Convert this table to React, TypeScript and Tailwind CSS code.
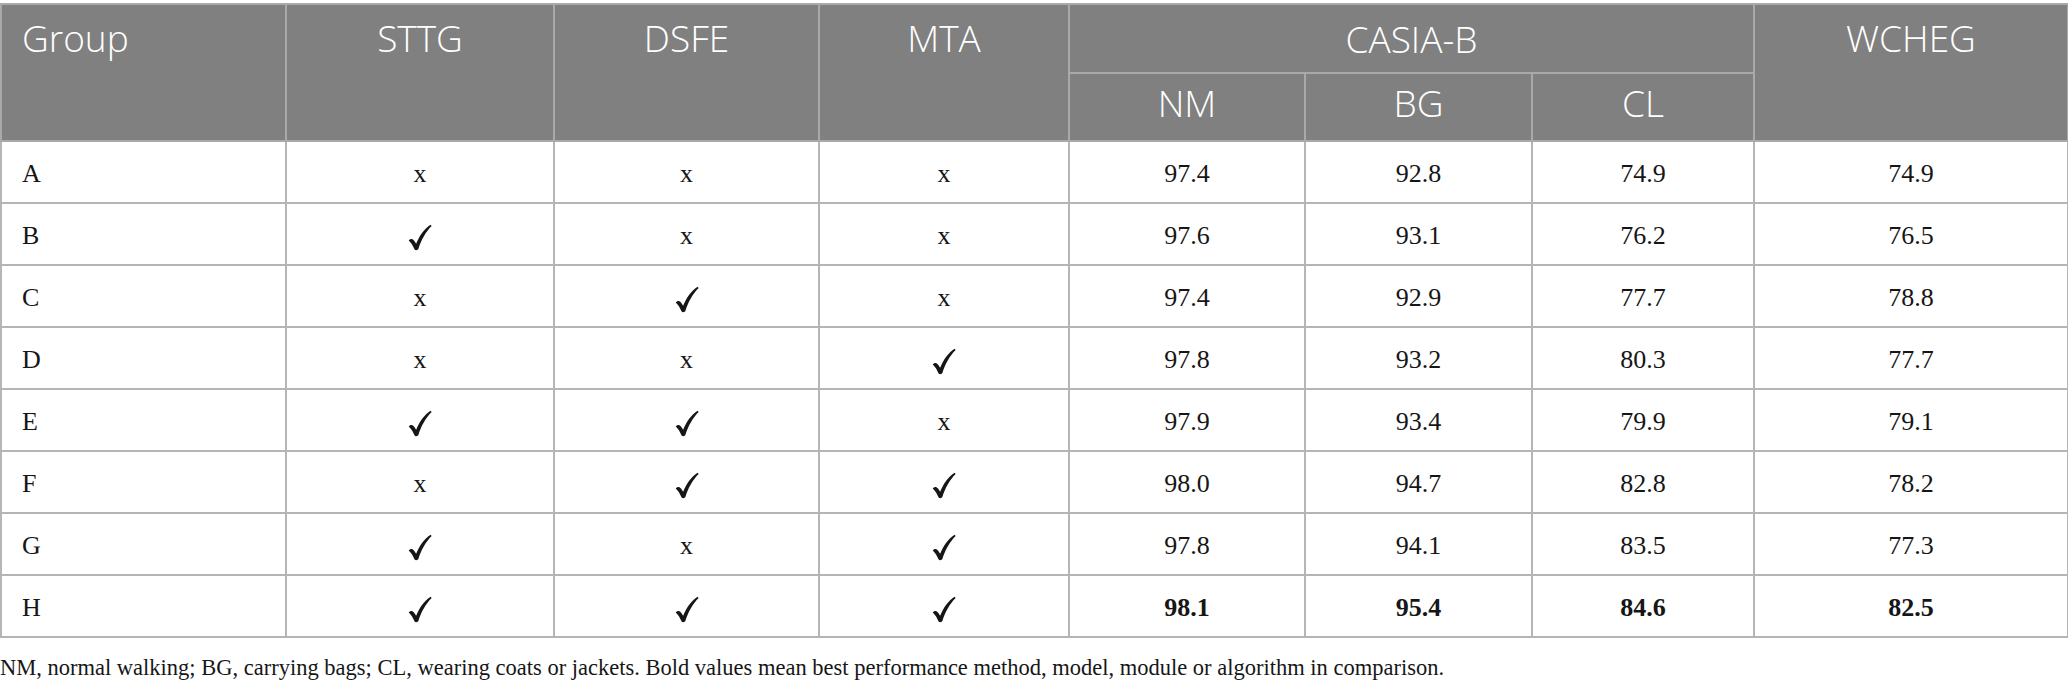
const rows: { g: string; s: boolean; d: boolean; m: boolean; v: string[]; bold?: boolean }[] = [
  { g: 'A', s: false, d: false, m: false, v: ['97.4', '92.8', '74.9', '74.9'] },
  { g: 'B', s: true, d: false, m: false, v: ['97.6', '93.1', '76.2', '76.5'] },
  { g: 'C', s: false, d: true, m: false, v: ['97.4', '92.9', '77.7', '78.8'] },
  { g: 'D', s: false, d: false, m: true, v: ['97.8', '93.2', '80.3', '77.7'] },
  { g: 'E', s: true, d: true, m: false, v: ['97.9', '93.4', '79.9', '79.1'] },
  { g: 'F', s: false, d: true, m: true, v: ['98.0', '94.7', '82.8', '78.2'] },
  { g: 'G', s: true, d: false, m: true, v: ['97.8', '94.1', '83.5', '77.3'] },
  { g: 'H', s: true, d: true, m: true, v: ['98.1', '95.4', '84.6', '82.5'], bold: true },
];

function Check() {
  return (
    <svg viewBox="0 0 20 22" className="inline-block h-[27px] w-[24px] align-middle" fill="#161616">
      <path d="M0.6 13.4 C2.2 11.8 3.8 12 5 13.6 L6.8 16.2 C9.4 9.8 13.2 4.2 18.8 0.4 L19.7 1.4 C14.6 6.4 11 13.2 8.7 20.4 C8.1 21.9 6 22 5.4 20.8 C4.3 18 2.8 15.4 0.6 13.4 Z" />
    </svg>
  );
}

function Mark({ on }: { on: boolean }) {
  return on ? <Check /> : <span>x</span>;
}

const th = 'border-2 border-[#a9a9a9] font-light text-white';
const td = 'border-2 border-[#b5b5b5] text-center';

export default function App() {
  return (
    <div className="min-h-screen w-[2068px] bg-white pt-[3px] font-['Liberation_Serif',serif] text-[#161616]">
      <table className="w-[2067px] table-fixed border-collapse border-2 border-[#b5b5b5]">
        <colgroup>
          <col className="w-[285px]" />
          <col className="w-[268px]" />
          <col className="w-[265px]" />
          <col className="w-[250px]" />
          <col className="w-[236px]" />
          <col className="w-[227px]" />
          <col className="w-[222px]" />
          <col className="w-[314px]" />
        </colgroup>
        <thead className="bg-[#808080] font-['Open_Sans',sans-serif] text-[37px] leading-[40px]">
          <tr className="h-[69px]">
            <th rowSpan={2} className={`${th} pl-5 pt-[13px] text-left align-top`}>Group</th>
            <th rowSpan={2} className={`${th} pt-[13px] align-top`}>STTG</th>
            <th rowSpan={2} className={`${th} pt-[13px] align-top`}>DSFE</th>
            <th rowSpan={2} className={`${th} pt-[13px] align-top`}>MTA</th>
            <th colSpan={3} className={`${th} align-middle`}>CASIA-B</th>
            <th rowSpan={2} className={`${th} pt-[13px] align-top`}>WCHEG</th>
          </tr>
          <tr className="h-[68px]">
            <th className={`${th} pb-[8px] align-middle`}>NM</th>
            <th className={`${th} pb-[8px] align-middle`}>BG</th>
            <th className={`${th} pb-[8px] align-middle`}>CL</th>
          </tr>
        </thead>
        <tbody className="text-[26px] leading-[30px]">
          {rows.map((r) => (
            <tr key={r.g} className="h-[62px]">
              <td className="border-2 border-[#b5b5b5] pl-5 pt-[4px] text-left">{r.g}</td>
              <td className={`${td} pt-[4px]`}><Mark on={r.s} /></td>
              <td className={`${td} pt-[4px]`}><Mark on={r.d} /></td>
              <td className={`${td} pt-[4px]`}><Mark on={r.m} /></td>
              {r.v.map((v, i) => (
                <td key={i} className={`${td} pt-[4px] ${r.bold ? 'font-bold' : ''}`}>{v}</td>
              ))}
            </tr>
          ))}
        </tbody>
      </table>
      <p className="mt-[16px] text-[22.5px] leading-[28px]">
        NM, normal walking; BG, carrying bags; CL, wearing coats or jackets. Bold values mean best performance method, model, module or algorithm in comparison.
      </p>
    </div>
  );
}
